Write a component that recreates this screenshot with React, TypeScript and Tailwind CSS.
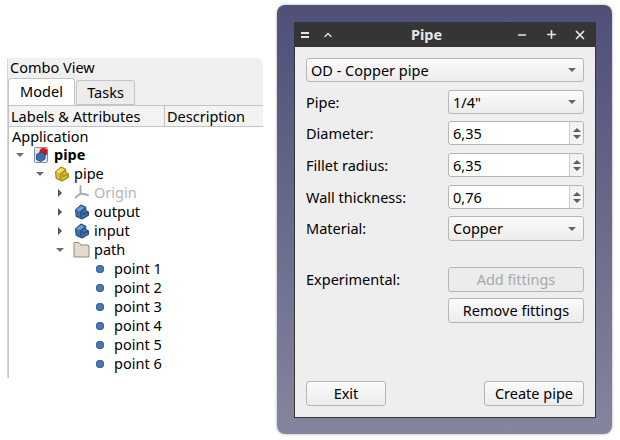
import { ChevronUp, Minus, Plus, X } from 'lucide-react'

const FONT = "font-['Noto_Sans',sans-serif]"

type TreeKind = 'doc' | 'part' | 'origin' | 'body' | 'folder' | 'point'

interface ITreeRow {
  label: string
  depth: number
  kind: TreeKind
  arrow?: 'open' | 'closed'
  bold?: boolean
  muted?: boolean
}

const ROWS: ITreeRow[] = [
  { label: 'pipe', depth: 0, kind: 'doc', arrow: 'open', bold: true },
  { label: 'pipe', depth: 1, kind: 'part', arrow: 'open' },
  { label: 'Origin', depth: 2, kind: 'origin', arrow: 'closed', muted: true },
  { label: 'output', depth: 2, kind: 'body', arrow: 'closed' },
  { label: 'input', depth: 2, kind: 'body', arrow: 'closed' },
  { label: 'path', depth: 2, kind: 'folder', arrow: 'open' },
  { label: 'point 1', depth: 3, kind: 'point' },
  { label: 'point 2', depth: 3, kind: 'point' },
  { label: 'point 3', depth: 3, kind: 'point' },
  { label: 'point 4', depth: 3, kind: 'point' },
  { label: 'point 5', depth: 3, kind: 'point' },
  { label: 'point 6', depth: 3, kind: 'point' },
]

function BlockIcon({ fill, light, dark }: { fill: string; light: string; dark: string }) {
  return (
    <svg width="16" height="16" viewBox="0 0 15 15">
      <path d="M1.5 5.5 6.5 1 11 3 11 6 13.5 7.5 13.5 10.5 7.5 14 2 11.5Z" fill={fill} stroke={dark} strokeWidth="1" strokeLinejoin="round" />
      <path d="M2 5.5 6.5 1.8 10.2 3.4 6 7Z" fill={light} />
      <path d="M6 7.5 6.5 13M6 7.5 10.5 4M8.5 10 13 7.5M8.5 10 8 7.5" fill="none" stroke={dark} strokeWidth="1" />
    </svg>
  )
}

function TreeIcon({ kind }: { kind: TreeKind }) {
  if (kind === 'doc') {
    return (
      <svg width="15" height="16" viewBox="0 0 15 16">
        <rect x="0.5" y="0.5" width="13" height="15" rx="1" fill="#dfe3ea" stroke="#8a8f99" />
        <circle cx="9.5" cy="5" r="4" fill="#d8141c" />
        <path d="M2.5 7.5 7 5 11 7 11 12 6.5 14.5 2.5 12.5Z" fill="#3d6fb0" stroke="#1f3f6f" strokeWidth="0.8" />
      </svg>
    )
  }
  if (kind === 'part') return <BlockIcon fill="#d9bd2b" light="#f2e15e" dark="#9a8518" />
  if (kind === 'body') return <BlockIcon fill="#3f70ab" light="#6b9bd0" dark="#1f4a7c" />
  if (kind === 'origin') {
    return (
      <svg width="15" height="15" viewBox="0 0 15 15">
        <path d="M6.5 1V8.5M6.5 8.5 1.5 12.5M6.5 8.5 14 10" fill="none" stroke="#a9a9a9" strokeWidth="1.8" strokeLinecap="round" />
      </svg>
    )
  }
  if (kind === 'folder') {
    return (
      <svg width="17" height="16" viewBox="0 0 17 16">
        <path d="M1 15V1.5a1 1 0 0 1 1-1h4l2 2.5h7a1 1 0 0 1 1 1V15Z" fill="#e3dacd" stroke="#9a8a76" strokeLinejoin="round" />
      </svg>
    )
  }
  return <span className="block h-2 w-2 rounded-full bg-[#4a78b5] shadow-[inset_0_0_0_1px_#3a659f]" />
}

function TreeItem({ row }: { row: ITreeRow }) {
  const paddings = ['pl-[5px]', 'pl-[25px]', 'pl-[45px]', 'pl-[65px]']
  return (
    <div className={`flex h-[19px] items-center ${paddings[row.depth]}`}>
      <span className="flex h-[19px] w-[11px] shrink-0 items-center justify-center">
        {row.arrow === 'open' && (
          <span className="h-0 w-0 border-x-[4px] border-t-[4px] border-x-transparent border-t-[#6e6e6e]" />
        )}
        {row.arrow === 'closed' && (
          <span className="h-0 w-0 border-y-[4px] border-l-[4px] border-y-transparent border-l-[#555555]" />
        )}
      </span>
      <span className={`flex h-[19px] shrink-0 items-center justify-center ${row.kind === 'point' ? 'ml-[8px] w-[14px]' : 'ml-[8px] w-[17px]'}`}>
        <TreeIcon kind={row.kind} />
      </span>
      <span
        className={`${row.kind === 'point' ? 'ml-[7px]' : 'ml-[4px]'} ${row.bold ? 'font-bold' : ''} ${row.muted ? 'text-[#b4b4b4]' : 'text-black'}`}
      >
        {row.label}
      </span>
    </div>
  )
}

function ComboBox({ label, className }: { label: string; className: string }) {
  return (
    <div
      className={`flex items-center justify-between rounded-[3px] border border-[#b5b5b5] bg-gradient-to-b from-[#fbfbfb] to-[#ececec] pl-[4px] pr-[6px] ${className}`}
    >
      <span>{label}</span>
      <span className="mr-[1px] h-0 w-0 border-x-[4px] border-t-[4px] border-x-transparent border-t-[#666666]" />
    </div>
  )
}

function SpinBox({ value }: { value: string }) {
  return (
    <div className="flex h-[24px] w-[136px] overflow-hidden rounded-[3px] border border-[#b5b5b5] bg-white">
      <span className="flex-1 pl-[4px] leading-[22px]">{value}</span>
      <span className="flex w-[14px] flex-col items-center justify-center gap-[3px] border-l border-[#cccccc] bg-[#f3f3f3]">
        <span className="h-0 w-0 border-x-[4px] border-b-[4px] border-x-transparent border-b-[#5c5c5c]" />
        <span className="h-0 w-0 border-x-[4px] border-t-[4px] border-x-transparent border-t-[#5c5c5c]" />
      </span>
    </div>
  )
}

function PushButton({ label, className, disabled }: { label: string; className: string; disabled?: boolean }) {
  return (
    <button
      type="button"
      className={`h-[25px] rounded-[3px] border border-[#b5b5b5] text-center ${disabled ? 'bg-[#ececec] text-[#a8a8a8]' : 'bg-gradient-to-b from-[#fbfbfb] to-[#ececec] text-black'} ${className}`}
    >
      {label}
    </button>
  )
}

function FormRow({ label, className, children }: { label: string; className: string; children: React.ReactNode }) {
  return (
    <div className={`flex items-center justify-between ${className}`}>
      <span>{label}</span>
      {children}
    </div>
  )
}

export default function App() {
  return (
    <div className={`flex h-[440px] w-[620px] overflow-hidden bg-white text-[14.5px] leading-[19px] text-black ${FONT}`}>
      {/* Combo view */}
      <div className="ml-[7px] mt-[58px] flex h-[320px] w-[256px] flex-col border-l border-[#d9d9d9]">
        <div className="h-[20px] rounded-tr-[6px] bg-[#f0f0f0] pl-[2px] leading-[18px]">Combo View</div>
        <div className="flex h-[27px] items-end bg-[#f0f0f0]">
          <div className="h-[27px] w-[67px] rounded-t-[3px] border border-b-0 border-[#c4c4c4] bg-white text-center leading-[24px]">
            Model
          </div>
          <div className="ml-[1px] h-[25px] w-[59px] rounded-t-[3px] border border-[#c4c4c4] bg-[#ececec] text-center leading-[22px]">
            Tasks
          </div>
        </div>
        <div className="flex-1 border-l border-t border-[#c4c4c4] bg-white">
          <div className="flex h-[21px] border-b border-[#c4c4c4] bg-[#f3f3f3] leading-[21px]">
            <div className="w-[156px] border-r border-[#c4c4c4] pl-[2px]">Labels &amp; Attributes</div>
            <div className="pl-[2px]">Description</div>
          </div>
          <div className="h-[18px] pl-[3px] leading-[19px]">Application</div>
          {ROWS.map((row, i) => (
            <TreeItem key={i} row={row} />
          ))}
        </div>
      </div>

      {/* Pipe dialog window */}
      <div className="ml-[14px] mt-[5px] h-[429px] w-[335px] rounded-[8px] bg-gradient-to-b from-[#4f4f78] to-[#85859f] p-[17px] shadow-[0_0_3px_rgba(0,0,0,0.35)]">
        <div className="flex h-[396px] w-[302px] flex-col border border-t-0 border-[#353535] bg-[#eeeeee]">
          <div className="flex h-[25px] shrink-0 items-center bg-[#353535] text-[#e6e6e6]">
            <span className="ml-[6px] flex w-[21px] flex-col gap-[2px]">
              <span className="h-[2px] w-[8px] bg-[#e6e6e6]" />
              <span className="h-[2px] w-[8px] bg-[#e6e6e6]" />
            </span>
            <ChevronUp size={12} strokeWidth={2.75} />
            <span className="flex-1 pl-[3px] text-center font-bold">Pipe</span>
            <Minus size={12} strokeWidth={3} />
            <Plus size={13} strokeWidth={3} className="ml-[17px]" />
            <X size={14} strokeWidth={3} className="ml-[15px] mr-[8px]" />
          </div>
          <div className="flex flex-1 flex-col px-[11px] pt-[11px]">
            <ComboBox label="OD - Copper pipe" className="h-[24px] w-[278px]" />
            <FormRow label="Pipe:" className="mt-[8px] h-[24px]">
              <ComboBox label='1/4"' className="h-[24px] w-[136px]" />
            </FormRow>
            <FormRow label="Diameter:" className="mt-[7px] h-[24px]">
              <SpinBox value="6,35" />
            </FormRow>
            <FormRow label="Fillet radius:" className="mt-[8px] h-[24px]">
              <SpinBox value="6,35" />
            </FormRow>
            <FormRow label="Wall thickness:" className="mt-[8px] h-[24px]">
              <SpinBox value="0,76" />
            </FormRow>
            <FormRow label="Material:" className="mt-[7px] h-[25px]">
              <ComboBox label="Copper" className="h-[25px] w-[136px]" />
            </FormRow>
            <FormRow label="Experimental:" className="mt-[26px] h-[25px]">
              <PushButton label="Add fittings" className="w-[136px]" disabled />
            </FormRow>
            <div className="mt-[6px] flex justify-end">
              <PushButton label="Remove fittings" className="w-[136px]" />
            </div>
            <div className="mt-[58px] flex justify-between">
              <PushButton label="Exit" className="w-[80px]" />
              <PushButton label="Create pipe" className="w-[100px]" />
            </div>
          </div>
        </div>
      </div>
    </div>
  )
}
